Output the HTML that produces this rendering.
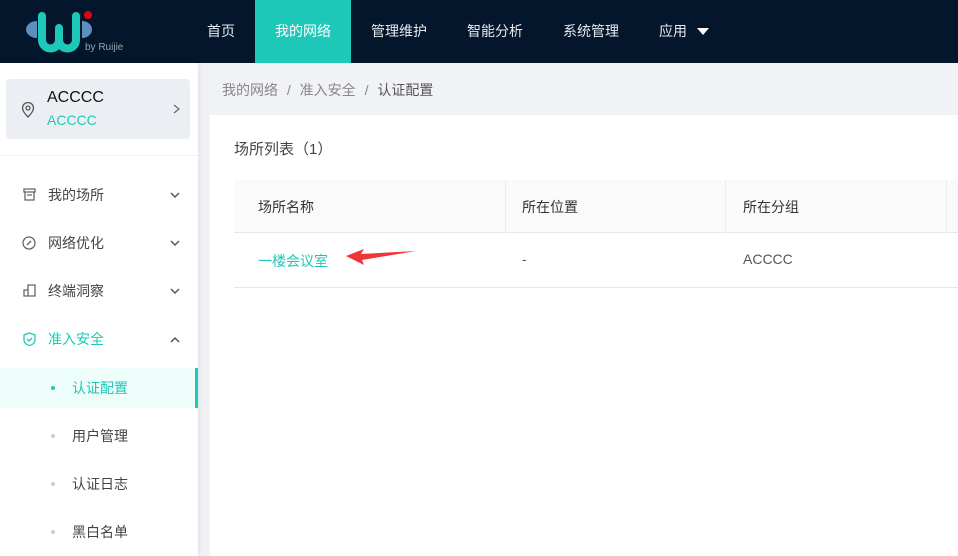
<!DOCTYPE html>
<html><head><meta charset="utf-8"><style>
*{margin:0;padding:0;box-sizing:border-box}
body{width:958px;height:556px;overflow:hidden;background:#f0f2f5;font-family:"Liberation Sans","Noto Sans CJK SC",sans-serif;font-size:14px;color:#333;position:relative}
.hd{position:absolute;left:0;top:0;width:958px;height:63px;background:#03162b}
.nav{position:absolute;top:0;height:63px;line-height:63px;color:#e6e9ee;font-size:14px}
.act{background:#1ec8b9;color:#fff;width:96px;text-align:center}
.sb{position:absolute;left:0;top:63px;width:198px;height:493px;background:#fff;box-shadow:2px 0 4px rgba(0,0,0,.06)}
.card{position:absolute;left:6px;top:16px;width:184px;height:60px;background:#ebeff3;border-radius:4px}
.mi{position:absolute;left:0;width:198px;height:40px;line-height:40px;font-size:14px;color:#444}
.mi .t{position:absolute;left:48px}
.mi svg.ar{position:absolute;left:170px;top:17px}
.sub .t{left:72px}
.dot{position:absolute;left:51px;top:18px;width:4px;height:4px;border-radius:2px;background:#c8ccd4}
.main{position:absolute;left:210px;top:115px;width:748px;height:441px;background:#fff}
.th{position:absolute;top:180px;height:53px;line-height:53px;background:#fafafa;border-bottom:1px solid #e8e8e8}
.c{position:absolute;font-size:14px}
</style></head><body>
<div class="hd">
<svg style="position:absolute;left:0;top:0" width="100" height="60" viewBox="0 0 100 60">
<path d="M37 21 A11 8.5 0 0 0 37 38 Z" fill="#5b8fc0"/>
<path d="M82 21 A10 8.5 0 0 1 82 38 Z" fill="#5b8fc0"/>
<path d="M42 16 V40 A8.5 8.5 0 0 0 59 40 V28 M59 40 A8.5 8.5 0 0 0 76 40 V16" fill="none" stroke="#1ec8b9" stroke-width="8" stroke-linecap="round"/>
<circle cx="88" cy="15" r="4" fill="#e1001e"/>
</svg>
<div style="position:absolute;left:85px;top:42px;color:#9aa3ad;font-size:10px">by Ruijie</div>
<div class="nav" style="left:207px">首页</div>
<div class="nav act" style="left:255px">我的网络</div>
<div class="nav" style="left:371px">管理维护</div>
<div class="nav" style="left:467px">智能分析</div>
<div class="nav" style="left:563px">系统管理</div>
<div class="nav" style="left:659px">应用</div>
<div style="position:absolute;left:697px;top:28px;border-left:6px solid transparent;border-right:6px solid transparent;border-top:7px solid #fff"></div>
</div>
<div class="sb">
<div class="card">
<svg style="position:absolute;left:15px;top:23px" width="14" height="16" viewBox="0 0 14 16"><path d="M7 15 C3 11 1.5 8.5 1.5 6 A5.5 5.5 0 0 1 12.5 6 C12.5 8.5 11 11 7 15Z" fill="none" stroke="#555" stroke-width="1.3"/><circle cx="7" cy="6" r="2" fill="none" stroke="#555" stroke-width="1.3"/></svg>
<div style="position:absolute;left:41px;top:10px;font-size:16px;color:#111">ACCCC</div>
<div style="position:absolute;left:41px;top:33px;font-size:14px;color:#1ec8b9">ACCCC</div>
<svg style="position:absolute;left:167px;top:25px" width="8" height="10"><path d="M1 1l5 4-5 4" fill="none" stroke="#666" stroke-width="1.2"/></svg>
</div>
<div style="position:absolute;left:0;top:92px;width:198px;height:1px;background:#f2f2f2"></div>
<div class="mi" style="top:112px"><svg style="position:absolute;left:23px;top:13px" width="13" height="13"><path d="M1 1h11v3H1zM2 4v8h9V4M4 7h5" fill="none" stroke="#666" stroke-width="1.3"/></svg><span class="t">我的场所</span><svg class="ar" width="10" height="7"><path d="M1 1l4 4 4-4" fill="none" stroke="#555" stroke-width="1.5"/></svg></div>
<div class="mi" style="top:160px"><svg style="position:absolute;left:22px;top:13px" width="14" height="14"><circle cx="7" cy="7" r="6" fill="none" stroke="#666" stroke-width="1.3"/><path d="M5 9 L9 5" stroke="#666" stroke-width="1.5"/></svg><span class="t">网络优化</span><svg class="ar" width="10" height="7"><path d="M1 1l4 4 4-4" fill="none" stroke="#555" stroke-width="1.5"/></svg></div>
<div class="mi" style="top:208px"><svg style="position:absolute;left:23px;top:13px" width="13" height="13"><path d="M1 12V6h4V1h7v11zM5 6v6" fill="none" stroke="#666" stroke-width="1.3"/></svg><span class="t">终端洞察</span><svg class="ar" width="10" height="7"><path d="M1 1l4 4 4-4" fill="none" stroke="#555" stroke-width="1.5"/></svg></div>
<div class="mi" style="top:256px;color:#1ec8b9"><svg style="position:absolute;left:23px;top:13px" width="13" height="14"><path d="M6.5 1L12 3v5c0 3-3 5-5.5 5.5C4 13 1 11 1 8V3z M4 7l2 2 3-3" fill="none" stroke="#1ec8b9" stroke-width="1.3"/></svg><span class="t">准入安全</span><svg class="ar" width="10" height="7"><path d="M1 6l4-4 4 4" fill="none" stroke="#555" stroke-width="1.5"/></svg></div>
<div class="mi sub" style="top:305px;background:#ecfdfa;color:#1ec8b9;border-right:3px solid #1ec8b9"><span class="dot" style="background:#1ec8b9"></span><span class="t">认证配置</span></div>
<div class="mi sub" style="top:353px"><span class="dot"></span><span class="t">用户管理</span></div>
<div class="mi sub" style="top:401px"><span class="dot"></span><span class="t">认证日志</span></div>
<div class="mi sub" style="top:449px"><span class="dot"></span><span class="t">黑白名单</span></div>
</div>
<div class="c" style="left:222px;top:80px;color:#888">我的网络 <span style="margin:0 5px">/</span> 准入安全 <span style="margin:0 5px">/</span> <span style="color:#555">认证配置</span></div>
<div class="main"></div>
<div class="c" style="left:234px;top:138px;font-size:15px;color:#444">场所列表（1）</div>
<div class="th" style="left:234px;width:724px"></div>
<div style="position:absolute;left:505px;top:180px;width:1px;height:53px;background:#ececec"></div>
<div style="position:absolute;left:725px;top:180px;width:1px;height:53px;background:#ececec"></div>
<div style="position:absolute;left:946px;top:180px;width:1px;height:53px;background:#ececec"></div>
<div class="c" style="left:258px;top:197px;color:#333">场所名称</div>
<div class="c" style="left:522px;top:197px;color:#333">所在位置</div>
<div class="c" style="left:743px;top:197px;color:#333">所在分组</div>
<div class="c" style="left:258px;top:251px;color:#1ec8b9">一楼会议室</div>
<div class="c" style="left:522px;top:251px;color:#555">-</div>
<div class="c" style="left:743px;top:251px;color:#555">ACCCC</div>
<div style="position:absolute;left:234px;top:287px;width:724px;height:1px;background:#e8e8e8"></div>
<svg style="position:absolute;left:344px;top:246px" width="75" height="20"><path d="M2 10 L20 3 L17 8 L72 5 L18 14 L20 19 Z" fill="#f03438"/></svg>
</body></html>
